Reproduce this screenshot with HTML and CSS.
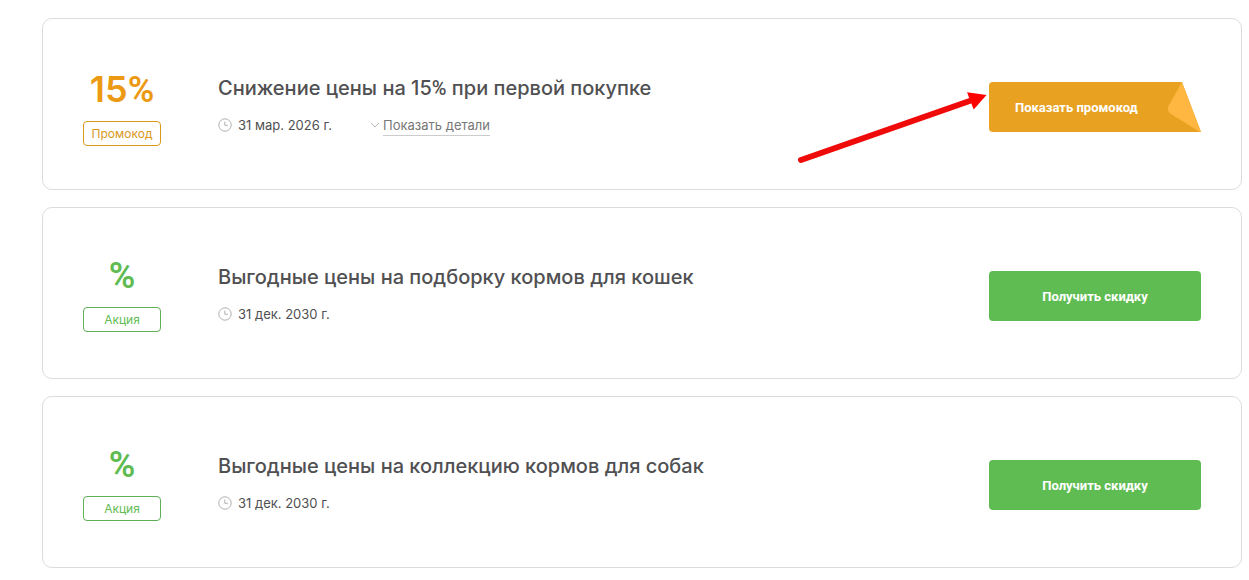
FILE: index.html
```html
<!DOCTYPE html>
<html lang="ru">
<head>
    <meta charset="UTF-8">
    <meta name="viewport" content="width=device-width, initial-scale=1.0">
    <title>Промокоды и акции</title>
    <link rel="stylesheet" href="styles.css">
</head>
<body>
    <main class="offers">
        <article class="card promo">
            <div class="discount">
                <span class="amount">15<span class="percent">%</span></span>
                <span class="badge">Промокод</span>
            </div>
            <div class="info">
                <h2>Снижение цены на 15<span class="percent">%</span> при первой покупке</h2>
                <div class="meta">
                    <svg class="clock" viewBox="0 0 14 14"><circle cx="7" cy="7" r="6.2"/><path d="M6.8 3.6v3.7h3"/></svg>
                    <span class="date">31 мар. 2026 г.</span>
                    <a class="details" href="#">
                        <svg class="chevron" viewBox="0 0 10 6"><path d="M1 1l4 4 4-4"/></svg>
                        <span>Показать детали</span>
                    </a>
                </div>
            </div>
            <div class="action">
                <svg class="arrow" viewBox="0 0 192 72">
                    <path class="shaft" d="M4 68L174 8.500"/>
                    <path class="head" d="M170 0.300L189.500 3L176.700 17.500Z"/>
                </svg>
                <button class="btn btn-code" type="button">
                    <span>Показать промокод</span>
                    <svg class="fold" viewBox="0 0 34 50"><path d="M15 0L1.500 24Q-0.500 29 4 32L33 50L34 49.500Z"/></svg>
                </button>
            </div>
        </article>

        <article class="card">
            <div class="discount">
                <span class="amount"><span class="percent">%</span></span>
                <span class="badge">Акция</span>
            </div>
            <div class="info">
                <h2>Выгодные цены на подборку кормов для кошек</h2>
                <div class="meta">
                    <svg class="clock" viewBox="0 0 14 14"><circle cx="7" cy="7" r="6.2"/><path d="M6.8 3.6v3.7h3"/></svg>
                    <span class="date">31 дек. 2030 г.</span>
                </div>
            </div>
            <div class="action">
                <button class="btn" type="button">Получить скидку</button>
            </div>
        </article>

        <article class="card">
            <div class="discount">
                <span class="amount"><span class="percent">%</span></span>
                <span class="badge">Акция</span>
            </div>
            <div class="info">
                <h2>Выгодные цены на коллекцию кормов для собак</h2>
                <div class="meta">
                    <svg class="clock" viewBox="0 0 14 14"><circle cx="7" cy="7" r="6.2"/><path d="M6.8 3.6v3.7h3"/></svg>
                    <span class="date">31 дек. 2030 г.</span>
                </div>
            </div>
            <div class="action">
                <button class="btn" type="button">Получить скидку</button>
            </div>
        </article>
    </main>
</body>
</html>
```
FILE: styles.css
```css
* {
    box-sizing: border-box;
}
body {
    margin: 0;
    background-color: #fff;
    color: #505052;
    font-family: Inter, "Noto Sans", sans-serif;
}
.offers {
    display: flex;
    flex-direction: column;
    gap: 17px;
    padding: 18px 7px 12px 42px;
}
.card {
    display: flex;
    align-items: center;
    min-height: 172px;
    padding: 24px 40px;
    border: 1px solid #dcdcdc;
    border-radius: 10px;
}
.discount {
    display: flex;
    flex-direction: column;
    align-items: center;
    gap: 11px;
    width: 78px;
    margin-right: 57px;
    color: #5fbb52;
}
.promo .discount {
    padding-top: 6px;
    color: #ec9a13;
}
.amount {
    font-size: 36px;
    font-weight: 600;
    line-height: 42px;
}
.percent {
    font-family: Roboto, sans-serif;
    line-height: 1;
}
.badge {
    width: 100%;
    border: 1px solid #5fae58;
    border-radius: 4px;
    font-size: 12px;
    line-height: 23px;
    text-align: center;
}
.promo .badge {
    border-color: #d9981c;
    color: #d9981c;
}
.info {
    flex: 1;
}
h2 {
    margin: 0 0 13px;
    font-size: 20px;
    font-weight: 500;
    line-height: 28px;
}
.meta {
    display: flex;
    align-items: center;
    font-size: 13px;
    line-height: 20px;
}
.clock {
    width: 14px;
    height: 14px;
    margin-right: 6px;
    fill: none;
    stroke: #b0b0b0;
}
.details {
    display: flex;
    align-items: center;
    gap: 3px;
    margin-left: 38px;
    color: #777;
    text-decoration: none;
}
.details span {
    text-decoration: underline 1px #ccc;
    text-underline-offset: 5px;
    text-decoration-skip-ink: none;
}
.chevron {
    width: 10px;
    height: 6px;
    fill: none;
    stroke: #b9b9b9;
}
.action {
    position: relative;
    width: 212px;
    margin-top: 6px;
}
.btn {
    display: block;
    width: 100%;
    height: 50px;
    padding: 0;
    border: 0;
    border-radius: 4px;
    background-color: #5fbc52;
    color: #fff;
    font-family: Roboto, sans-serif;
    font-size: 13px;
    font-weight: 700;
    cursor: pointer;
}
.btn-code {
    display: flex;
    align-items: center;
    justify-content: space-between;
    padding-left: 26px;
    background-color: #e9a122;
    clip-path: polygon(0 0, 193px 0, 100% 100%, 0 100%);
    border-bottom-right-radius: 0;
}
.fold {
    width: 34px;
    height: 50px;
    fill: #ffb741;
}
.arrow {
    position: absolute;
    top: 10px;
    right: 100%;
    width: 192px;
    height: 72px;
}
.shaft {
    stroke: #f00b0b;
    stroke-width: 6;
    stroke-linecap: round;
}
.head {
    fill: #f00;
}
```
